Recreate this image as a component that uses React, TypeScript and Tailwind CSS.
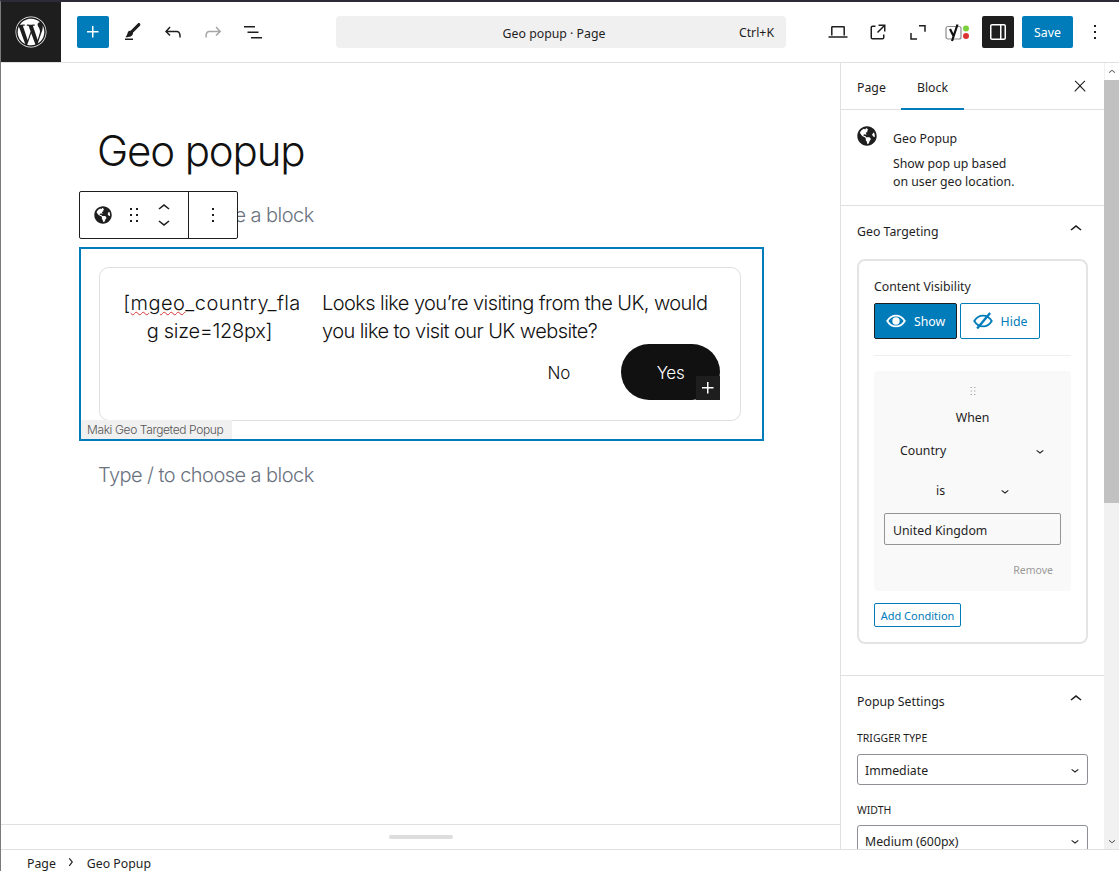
import React from "react";
import { FaWordpress, FaGlobeAmericas } from "react-icons/fa";

const P: React.FC<{ d: string; s?: number; c?: string }> = ({ d, s = 24, c = "" }) => (
  <svg width={s} height={s} viewBox="0 0 24 24" fill="currentColor" className={c}><path d={d} /></svg>
);
const plus = "M11 12.5V17.5H12.5V12.5H17.5V11H12.5V6H11V11H6V12.5H11Z";
const undo = "M18.3 11.7c-.6-.6-1.4-.9-2.3-.9H6.7l2.9-3.3-1.1-1-4.5 5L8.5 16l1-1-2.7-2.7H16c.5 0 .9.2 1.3.5 1 1 1 3.4 1 4.5v.3h1.5v-.2c0-1.5 0-4.3-1.5-5.7z";
const redo = "M15.6 6.5l-1.1 1 2.9 3.3H8c-.9 0-1.7.3-2.3.9-1.4 1.5-1.4 4.2-1.4 5.6v.2h1.5v-.3c0-1.1 0-3.5 1-4.5.3-.3.7-.5 1.3-.5h9.2L14.5 15l1.1 1.1 4.6-4.6-4.6-5z";
const list = "M3 6h11v1.5H3V6Zm3.5 5.5h11V13h-11v-1.5ZM21 17H10v1.5h11V17Z";
const tools = "M4 20h8v-1.5H4V20zM18.9 3.5c-.6-.6-1.5-.6-2.1 0l-7.2 7.2c-.4-.1-.7 0-1.1.1-.5.2-1.5.7-1.9 2.2-.4 1.7-.8 2.2-1.1 2.7-.1.1-.2.3-.3.4l-.6 1.1H6c2 0 3.4-.4 4.7-1.4.8-.6 1.2-1.4 1.3-2.3 0-.3 0-.5-.1-.7L19 5.7c.5-.6.5-1.6-.1-2.2z";
const drawer = "M18 4H6c-1.1 0-2 .9-2 2v12c0 1.1.9 2 2 2h12c1.1 0 2-.9 2-2V6c0-1.1-.9-2-2-2zm-4 14.5H6c-.3 0-.5-.2-.5-.5V6c0-.3.2-.5.5-.5h8v13zm4.5-.5c0 .3-.2.5-.5.5h-2.5v-13H18c.3 0 .5.2.5.5v12z";
const ext = "M19.5 4.5h-7V6h4.44l-5.97 5.97 1.06 1.06L18 7.06v4.44h1.5v-7Zm-13 1a2 2 0 0 0-2 2v10a2 2 0 0 0 2 2h10a2 2 0 0 0 2-2v-3H17v3a.5.5 0 0 1-.5.5h-10a.5.5 0 0 1-.5-.5v-10a.5.5 0 0 1 .5-.5h3V5.5h-3Z";
const more = "M13 19h-2v-2h2v2zm0-6h-2v-2h2v2zm0-6h-2V5h2v2z";
const drag = "M8 7h2V5H8v2zm0 6h2v-2H8v2zm0 6h2v-2H8v2zm6-14v2h2V5h-2zm0 8h2v-2h-2v2zm0 6h2v-2h-2v2z";
const close = "M13 11.8l6.1-6.3-1-1-6.1 6.2-6.1-6.2-1 1 6.1 6.3-6.5 6.7 1 1 6.5-6.6 6.5 6.6 1-1z";
const up = "M6.5 12.4L12 8l5.5 4.4-.9 1.2L12 10l-4.5 3.6-1-1.2z";
const down = "M17.5 11.6L12 16l-5.5-4.4.9-1.2L12 14l4.5-3.6 1 1.2z";

const Laptop = () => (
  <svg width="24" height="24" viewBox="0 0 24 24" fill="none" stroke="currentColor" strokeWidth="1.5">
    <path d="M5.8 15.5V7.2a.5.5 0 0 1 .5-.5h11.4a.5.5 0 0 1 .5.5v8.3" />
    <path d="M2.5 17h19" />
  </svg>
);
const Full = () => (
  <svg width="24" height="24" viewBox="0 0 24 24" fill="none" stroke="currentColor" strokeWidth="1.5">
    <path d="M13 5.8h6v6M5 13v6h6" />
  </svg>
);
const Yoast = () => (
  <svg width="26" height="24" viewBox="0 0 26 24" fill="none">
    <rect x="1" y="6.500" width="15" height="12.500" rx="2" stroke="#8c8c8c" strokeWidth="1.2" />
    <path d="M5 9l3.500 7M12.500 4.500L7 21" stroke="#111" strokeWidth="2.2" />
    <circle cx="21" cy="8.500" r="3" fill="#7ad03a" />
    <circle cx="21" cy="16" r="3" fill="#dc3232" />
  </svg>
);
const Eye = () => (
  <svg width="20" height="20" viewBox="0 0 24 24" fill="none" stroke="currentColor" strokeWidth="2.2">
    <path d="M1.500 12S5.500 5.500 12 5.500 22.500 12 22.500 12 18.500 18.500 12 18.500 1.500 12 1.500 12Z" />
    <circle cx="12" cy="12" r="3.300" fill="currentColor" />
  </svg>
);
const EyeOff = () => (
  <svg width="20" height="20" viewBox="0 0 24 24" fill="none" stroke="currentColor" strokeWidth="2.2">
    <path d="M1.500 12S5.500 5.500 12 5.500 22.500 12 22.500 12 18.500 18.500 12 18.500 1.500 12 1.500 12Z" />
    <path d="M20.500 2.500 5 21" strokeWidth="2.800" />
  </svg>
);

const Sel: React.FC<{ label: string }> = ({ label }) => (
  <div className="h-[31px] border border-[#8c8f94] rounded-[3px] flex items-center justify-between pl-[7px] pr-[4px] bg-white shrink-0">
    <span className="pt-[4px]">{label}</span>
    <P d={down} s={16} />
  </div>
);

export default function App() {
  return (
    <div className="h-[871px] w-[1119px] overflow-hidden bg-white flex flex-col border-t-2 border-t-[#2c2c38] border-l border-l-[#7a7a7a] text-[#1e1e1e] text-[12.300px] relative" style={{ fontFamily: '"Noto Sans", sans-serif' }}>
      {/* top bar */}
      <header className="h-[61px] shrink-0 flex items-center border-b border-[#e0e0e0] pb-px">
        <div className="w-[60px] h-[60px] bg-[#1e1e1e] flex items-center justify-center text-white shrink-0">
          <FaWordpress size={32} />
        </div>
        <div className="ml-4 w-8 h-8 bg-[#007cba] rounded-[2px] text-white flex items-center justify-center"><P d={plus} /></div>
        <div className="ml-2 w-8 flex justify-center"><P d={tools} /></div>
        <div className="ml-2 w-8 flex justify-center"><P d={undo} /></div>
        <div className="ml-2 w-8 flex justify-center text-[#a6a6a6]"><P d={redo} /></div>
        <div className="ml-2 w-8 flex justify-center"><P d={list} /></div>
        <div className="ml-[67px] w-[450px] h-8 bg-[#f0f0f0] rounded-[4px] flex items-center relative">
          <span className="w-full text-center pr-[14px] pt-[5px]">Geo popup · Page</span>
          <span className="absolute right-[12px] top-[8px]">Ctrl+K</span>
        </div>
        <div className="ml-[36px] w-8 flex justify-center"><Laptop /></div>
        <div className="ml-2 w-8 flex justify-center"><P d={ext} /></div>
        <div className="ml-2 w-8 flex justify-center"><Full /></div>
        <div className="ml-[8px] w-8 flex justify-center"><Yoast /></div>
        <div className="ml-[8px] w-8 h-8 bg-[#1e1e1e] rounded-[2px] text-white flex items-center justify-center"><P d={drawer} /></div>
        <div className="ml-2 w-[51px] h-8 bg-[#007cba] rounded-[2px] text-white flex items-center justify-center pt-[3px]">Save</div>
        <div className="ml-[10px] w-6 flex justify-center"><P d={more} /></div>
      </header>

      <div className="flex-1 flex min-h-0">
        {/* canvas column */}
        <main className="w-[840px] shrink-0 border-r border-[#e0e0e0] flex flex-col relative" style={{ fontFamily: 'Inter, sans-serif' }}>
          <div className="flex-1 pl-[78px] pt-[59px] min-h-0">
            <h1 className="pl-[18px] text-[42px] leading-[58px] font-light tracking-[-1.15px] text-[#111]">Geo popup</h1>
            <p className="pl-[19px] mt-[21px] h-[28px] text-[20px] leading-[28px] font-light text-[#6b7280] tracking-[-0.55px]">Type / to choose a block</p>
            <section className="mt-[18px] w-[685px] h-[194px] border-2 border-[#007cba] pt-[18px] pl-[18px] pr-[21px] relative">
              <div className="h-[154px] border border-[#dfdfdf] rounded-[10px] flex pl-[23px] pr-[20px] pt-[21px]">
                <div className="w-[178px] text-center text-[20px] leading-[28px] font-light text-[#111] tracking-[-0.3px] shrink-0">
                  <span className="tracking-[0.45px]">[<span className="underline decoration-wavy decoration-[#d63638] decoration-1">mgeo</span>_country_fla</span><br /><span className="inline-block mr-[5px]">g size=128px]</span>
                </div>
                <div className="ml-[21px] flex-1 flex flex-col">
                  <p className="text-[20px] leading-[28px] font-light text-[#111] tracking-[-0.57px]">Looks like you’re visiting from the UK, would you like to visit our UK website?</p>
                  <div className="-mt-[1px] flex items-center justify-end">
                    <span className="text-[17px] font-light text-[#111] mr-[51px] tracking-[-0.3px] pt-[4px]">No</span>
                    <div className="w-[99px] h-[56px] rounded-[28px] bg-[#111] text-white text-[17px] font-light flex items-center justify-center relative tracking-[-0.3px] pt-[4px]">
                      Yes
                      <div className="absolute right-0 bottom-0 w-6 h-6 bg-[#1e1e1e] flex items-center justify-center"><P d={plus} /></div>
                    </div>
                  </div>
                </div>
              </div>
              <div className="absolute left-0 bottom-0 w-[151px] h-[19px] bg-[#f0f0f0] flex items-center pl-[6px] text-[12px] font-light text-[#555] tracking-[-0.38px]">Maki Geo Targeted Popup</div>
            </section>
            <p className="pl-[19px] mt-[20px] text-[20px] leading-[28px] font-light text-[#6b7280] tracking-[-0.55px]">Type / to choose a block</p>
          </div>
          <div className="h-[25px] shrink-0 border-t border-[#e0e0e0] flex justify-center items-center">
            <div className="w-16 h-1 rounded-full bg-[#ddd]" />
          </div>
          {/* floating block toolbar */}
          <div className="absolute left-[78px] top-[128px] w-[159px] h-[48px] bg-white border border-[#1e1e1e] rounded-[2px] flex items-center text-[#1e1e1e]">
            <div className="w-[109px] h-full flex items-center border-r border-[#1e1e1e] relative">
              <FaGlobeAmericas size={18} className="ml-[14px]" />
              <P d={drag} s={24} c="ml-[10px] w-6" />
              <div className="ml-[6px] flex flex-col items-center">
                <P d={up} s={24} c="-mb-[5px]" />
                <P d={down} s={24} c="-mt-[5px]" />
              </div>
            </div>
            <div className="flex-1 flex justify-center"><P d={more} /></div>
          </div>
        </main>

        {/* sidebar */}
        <aside className="w-[263px] shrink-0 flex flex-col min-h-0 overflow-hidden">
          <div className="h-[47px] shrink-0 border-b border-[#e0e0e0] flex relative">
            <div className="w-[60px] pl-4 flex items-center pt-[5px]">Page</div>
            <div className="w-[63px] flex items-center justify-center border-b-2 border-[#007cba] h-[47px] pt-[5px]">Block</div>
            <div className="absolute right-[12px] top-[11px]"><P d={close} s={24} c="scale-75" /></div>
          </div>
          <div className="h-[96px] shrink-0 border-b border-[#e0e0e0] flex pl-4 pt-[15px] leading-[18px]">
            <FaGlobeAmericas size={20} className="shrink-0 mt-[1px]" />
            <div className="ml-4">
              <div className="mt-[5px]">Geo Popup</div>
              <div className="mt-[7px]">Show pop up based<br />on user geo location.</div>
            </div>
          </div>
          <div className="h-[470px] shrink-0 border-b border-[#e0e0e0] px-4 pt-[16px]">
            <div className="flex items-center justify-between h-[18px]">
              <span className="pt-[2px]">Geo Targeting</span>
              <P d={up} s={24} c="-mt-[4px]" />
            </div>
            <div className="mt-[19px] w-[231px] h-[385px] border-2 border-[#e4e4e4] rounded-[8px] px-[15px] pt-[17px]">
              <div className="leading-[18px]">Content Visibility</div>
              <div className="mt-[7px] flex gap-[3px]">
                <div className="w-[83px] h-[36px] bg-[#007cba] border border-[#1e1e1e] rounded-[2px] text-white flex items-center justify-center gap-[8px]"><Eye /><span className="pt-[2px]">Show</span></div>
                <div className="w-[80px] h-[36px] border border-[#007cba] rounded-[2px] text-[#007cba] flex items-center justify-center gap-[8px]"><EyeOff /><span className="pt-[2px]">Hide</span></div>
              </div>
              <div className="mt-[16px] border-t border-[#eee]" />
              <div className="mt-[15px] w-[197px] h-[220px] bg-[#f9f9f9] rounded-[4px] flex flex-col px-[10px]">
                <div className="h-[39px] flex items-center justify-center text-[#999]"><P d={drag} s={14} /></div>
                <div className="text-center leading-[18px] -mt-[1px]">When</div>
                <div className="mt-[15px] flex items-center justify-between leading-[18px] pl-[16px] pr-[13px]">
                  <span>Country</span><P d={down} s={16} />
                </div>
                <div className="mt-[22px] flex items-center leading-[18px] pl-[52px]">
                  <span>is</span><P d={down} s={16} c="ml-[52px]" />
                </div>
                <div className="mt-[13px] h-[32px] border border-[#949494] rounded-[2px] flex items-center pl-[8px] pt-[5px]">United Kingdom</div>
                <div className="mt-[18px] text-right pr-[8px] text-[10.500px] text-[#999]">Remove</div>
              </div>
              <div className="mt-[12px] w-[87px] h-[24px] border border-[#007cba] rounded-[2px] text-[#007cba] text-[11px] flex items-center justify-center pt-[2px]">Add Condition</div>
            </div>
          </div>
          <div className="px-4 pt-[16px]">
            <div className="flex items-center justify-between h-[18px]">
              <span className="pt-[2px]">Popup Settings</span>
              <P d={up} s={24} c="-mt-[4px]" />
            </div>
            <div className="mt-[21px] text-[10.500px] leading-[14px] uppercase">Trigger type</div>
            <div className="mt-[9px]"><Sel label="Immediate" /></div>
            <div className="mt-[18px] text-[10.500px] leading-[14px] uppercase">Width</div>
            <div className="mt-[8px]"><Sel label="Medium (600px)" /></div>
          </div>
        </aside>

        {/* scrollbar */}
        <div className="w-[15px] shrink-0 bg-[#f1f1f1] flex flex-col items-center">
          <div className="h-[17px] shrink-0 bg-white flex items-center justify-center text-[#555]"><P d={up} s={14} /></div>
          <div className="w-full h-[423px] bg-[#c1c1c1] shrink-0" />
          <div className="flex-1" />
          <div className="h-[17px] shrink-0 flex items-center justify-center text-[#555]"><P d={down} s={14} /></div>
        </div>
      </div>

      {/* breadcrumb */}
      <footer className="h-[22px] shrink-0 border-t border-[#e0e0e0] bg-white flex items-center pl-[26px] pt-[7px]">
        <span>Page</span>
        <P d={down} s={18} c="-rotate-90 ml-[5px] -mt-[4px]" />
        <span className="ml-[8px]">Geo Popup</span>
      </footer>
    </div>
  );
}
